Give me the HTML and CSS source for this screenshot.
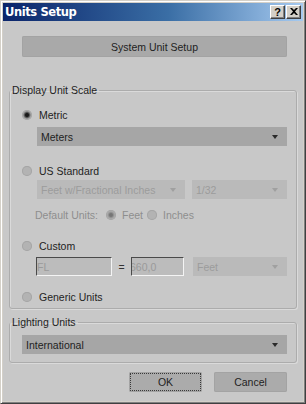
FILE: index.html
```html
<!DOCTYPE html>
<html>
<head>
<meta charset="utf-8">
<link rel="stylesheet" href="styles.css">
</head>
<body>
<div class="window">
  <div class="titlebar">
    <span class="title">Units Setup</span>
    <div class="caption-btns">
      <span class="cbtn help">?</span>
      <span class="cbtn close"><svg width="8" height="7" viewBox="0 0 8 7"><path d="M0 0h2l2 2 2-2h2L5 3.5 8 7H6L4 5 2 7H0l3-3.5z" fill="#000"/></svg></span>
    </div>
  </div>
  <div class="content">
    <div class="btn wide">System Unit Setup</div>

    <fieldset class="group scale">
      <legend>Display Unit Scale</legend>
      <div class="gbody">
        <div class="row r-metric"><span class="radio on"></span><span>Metric</span></div>
        <div class="select s-meters"><span>Meters</span><i class="arrow"></i></div>

        <div class="row r-us"><span class="radio"></span><span>US Standard</span></div>
        <div class="sel-row">
          <div class="select dis s-frac"><span>Feet w/Fractional Inches</span><i class="arrow"></i></div>
          <div class="select dis s-32"><span>1/32</span><i class="arrow"></i></div>
        </div>
        <div class="row r-default dis-text">
          <span class="lbl-default">Default Units:</span>
          <span class="radio on dis"></span><span class="lbl-feet">Feet</span>
          <span class="radio"></span><span class="lbl-inches">Inches</span>
        </div>

        <div class="row r-custom"><span class="radio"></span><span>Custom</span></div>
        <div class="input-row">
          <div class="field f-fl"><span>FL</span></div>
          <span class="eq">=</span>
          <div class="field f-num"><span class="clip">660,0</span></div>
          <div class="select dis s-feet"><span>Feet</span><i class="arrow"></i></div>
        </div>

        <div class="row r-generic"><span class="radio"></span><span>Generic Units</span></div>
      </div>
    </fieldset>

    <fieldset class="group lighting">
      <legend>Lighting Units</legend>
      <div class="gbody">
        <div class="select s-intl"><span>International</span><i class="arrow"></i></div>
      </div>
    </fieldset>

    <div class="actions">
      <div class="btn dlg ok"><span>OK</span></div>
      <div class="btn dlg">Cancel</div>
    </div>
  </div>
</div>
</body>
</html>
```

FILE: styles.css
```css
* { box-sizing: border-box; }

html, body {
  margin: 0;
  padding: 0;
  background: #d4d0c8;
}

body {
  font-family: "Liberation Sans", Arial, sans-serif;
  font-size: 10.5px;
  color: #1e1e1e;
}

.window {
  width: 306px;
  height: 404px;
  border: 1px solid;
  border-color: #d4d0c8 #404040 #404040 #d4d0c8;
  box-shadow: inset 1px 1px #ffffff, inset -1px -1px #808080;
  padding: 2px;
  background: #d4d0c8;
  display: flex;
  flex-direction: column;
}

.titlebar {
  height: 18px;
  flex: none;
  background: linear-gradient(to right, #0a246a, #3a6ea5 55%, #a6caf0);
  display: flex;
  align-items: center;
  justify-content: space-between;
  padding: 0 2px 0 2px;
}

.title {
  color: #ffffff;
  font-weight: bold;
  font-size: 11.5px;
  font-family: "DejaVu Sans", "Liberation Sans", sans-serif;
  letter-spacing: -0.4px;
}

.caption-btns {
  display: flex;
  gap: 1px;
}

.cbtn {
  width: 15px;
  height: 14px;
  background: #d4d0c8;
  border: 1px solid;
  border-color: #ffffff #404040 #404040 #ffffff;
  box-shadow: inset -1px -1px #808080;
  display: flex;
  align-items: center;
  justify-content: center;
  color: #000;
  font-weight: bold;
  font-size: 11px;
  line-height: 1;
}

.cbtn svg { display: block; margin-top: -1px; }

.content {
  flex: 1;
  background: #c8c8c8;
  padding: 15px 6px 0 6px;
}

.btn {
  background: #a9a9a9;
  border-radius: 2px;
  box-shadow: inset 0 0 0 1px #a3a3a3;
  display: flex;
  align-items: center;
  justify-content: center;
  color: #1e1e1e;
}

.btn.wide {
  height: 21px;
  margin: 0 10px 0 13px;
}

.group {
  margin: 0;
  padding: 0;
  min-width: 0;
  border: 1px solid #acacac;
  border-radius: 3px;
  box-shadow: 1px 1px 0 #dadada, inset 1px 1px 0 #dadada;
}

.group legend {
  padding: 0 2px;
  margin-left: 0;
  line-height: 13px;
  font-size: 10.5px;
}

.scale { margin-top: 27px; }
.lighting { margin-top: 7px; }

.gbody {
  padding: 0 9px 4px 12px;
}

.lighting .gbody { padding-bottom: 8px; }

.row {
  height: 14px;
  display: flex;
  align-items: center;
}

.radio {
  width: 10px;
  height: 10px;
  flex: none;
  border-radius: 50%;
  background: #b3b3b3;
  box-shadow: inset 0 0 0 1px #a6a6a6;
  margin-right: 7px;
}

.radio.on {
  background: radial-gradient(circle, #151515 0, #1e1e1e 1.6px, #5a5a5a 2.6px, #a8a8a8 4px, #b3b3b3 5px);
}

.radio.on.dis {
  background: radial-gradient(circle, #727272 0, #7a7a7a 1.6px, #999 2.8px, #b3b3b3 4.2px);
}

.r-metric { margin-top: 11px; }
.r-us { margin-top: 18px; }
.r-default { margin-top: 9px; margin-left: 13px; }
.r-custom { margin-top: 17px; }
.r-generic { margin-top: 14px; }

.dis-text { color: #8e8e8e; }

.lbl-default { width: 71px; flex: none; }
.r-default .radio { margin-right: 6px; }
.lbl-feet { width: 25px; flex: none; }

.select {
  height: 19px;
  background: #a6a6a6;
  display: flex;
  align-items: center;
  justify-content: space-between;
  padding: 0 9px 0 4px;
  color: #1e1e1e;
}

.select.dis {
  background: #bababa;
  color: #9c9c9c;
}

.arrow {
  width: 0;
  height: 0;
  border-left: 3px solid transparent;
  border-right: 3px solid transparent;
  border-top: 4px solid #2a2a2a;
}

.select.dis .arrow { border-top-color: #a0a0a0; }

.s-meters { margin: 5px 0 0 15px; }

.sel-row {
  display: flex;
  gap: 7px;
  margin: 2px 0 0 15px;
}

.s-frac { width: 148px; flex: none; }
.s-32 { flex: 1; }

.input-row {
  display: flex;
  align-items: center;
  margin: 4px 0 0 14px;
}

.field {
  height: 19px;
  background: #bcbcbc;
  border: 1px solid;
  border-color: #4a4a4a #f4f4f4 #f4f4f4 #4a4a4a;
  color: #9a9a9a;
  display: flex;
  align-items: center;
  overflow: hidden;
  white-space: nowrap;
  padding-left: 0;
}

.f-fl { width: 76px; }
.f-num { width: 53px; }
.clip { margin-left: -2px; }

.eq {
  width: 19px;
  text-align: center;
  color: #333;
}

.s-feet { flex: 1; margin-left: 9px; }

.s-intl { margin-top: 6px; }

.actions {
  display: flex;
  justify-content: flex-end;
  gap: 12px;
  margin-top: 9px;
  padding-right: 10px;
}

.btn.dlg {
  width: 73px;
  height: 20px;
  background: #ababab;
}

.btn.ok {
  outline: 1px dotted #3a3a3a;
  outline-offset: -2px;
}
```
